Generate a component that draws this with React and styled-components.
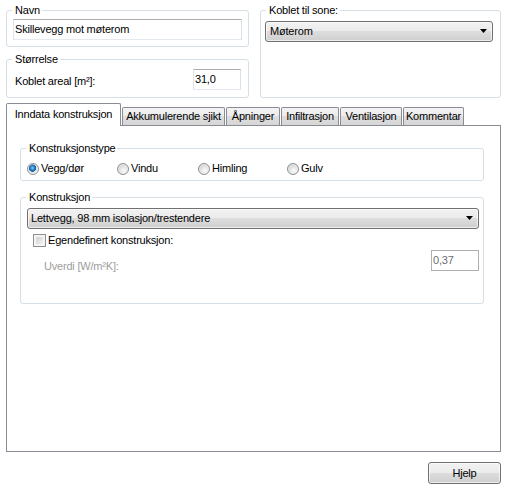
import React from 'react';
import styled, { createGlobalStyle } from 'styled-components';

const GlobalStyle = createGlobalStyle`
  html, body { margin: 0; padding: 0; background: #ffffff; }
  body {
    font-family: "Liberation Sans", Arial, sans-serif;
    font-size: 11px;
    line-height: 13px;
    letter-spacing: -0.2px;
    color: #000;
  }
  *, *::before, *::after { box-sizing: border-box; }
`;

const Window = styled.div`
  width: 507px;
  height: 492px;
  padding: 4px 6px 0 6px;
  display: flex;
  flex-direction: column;
`;

const TopArea = styled.div`
  display: grid;
  grid-template-columns: 243px 1fr;
  column-gap: 11px;
`;

const Column = styled.div`
  display: flex;
  flex-direction: column;
  gap: 6px;
`;

const Group = styled.fieldset`
  margin: ${(p) => p.$mt || 0}px 0 0 0;
  padding: 0;
  min-width: 0;
  border: 1px solid #d5dfe5;
  border-radius: 3px;
  flex: ${(p) => (p.$grow ? 1 : 'none')};
  height: ${(p) => (p.$h ? `${p.$h}px` : 'auto')};
`;

const Legend = styled.legend`
  margin-left: 5px;
  padding: 0 2px 0 3px;
  line-height: 13px;
  font-size: 11px;
`;

const GroupBody = styled.div`
  padding: ${(p) => p.$pad};
  display: flex;
  flex-direction: column;
`;

const TextBox = styled.input`
  display: block;
  height: 21px;
  width: ${(p) => (p.$w ? `${p.$w}px` : '100%')};
  margin: 0;
  padding: 0 1px 2px 1px;
  font-family: inherit;
  font-size: 11px;
  letter-spacing: -0.2px;
  color: ${(p) => (p.$disabled ? '#6d6d6d' : '#000')};
  background: #fff;
  border: 1px solid;
  border-color: ${(p) =>
    p.$disabled ? '#afafaf' : '#abadb3 #dbdfe6 #e3e9ef #e2e3ea'};
  border-radius: 0;
  outline: none;
`;

const Row = styled.div`
  display: flex;
  align-items: flex-start;
  justify-content: space-between;
  padding-left: ${(p) => p.$indent || 0}px;
  margin-top: ${(p) => p.$mt || 0}px;
`;

const FieldLabel = styled.span`
  padding-top: ${(p) => p.$offset || 0}px;
  color: ${(p) => (p.$disabled ? '#9d9d9d' : '#000')};
  white-space: nowrap;
`;

const Combo = styled.div`
  height: 21px;
  border: 1px solid #707070;
  border-radius: 3px;
  background: linear-gradient(#f2f2f2 0%, #ebebeb 50%, #dddddd 50%, #cfcfcf 100%);
  box-shadow: inset 0 0 0 1px rgba(255, 255, 255, 0.65);
  display: flex;
  align-items: center;
  justify-content: space-between;
  padding: 0 ${(p) => p.$arrowPad || 5}px 1px ${(p) => p.$textPad || 3}px;
  white-space: nowrap;
`;

const Arrow = () => (
  <svg width="7" height="4" viewBox="0 0 7 4">
    <polygon points="0,0 7,0 3.5,4" fill="#000" />
  </svg>
);

const TabStrip = styled.div`
  display: flex;
  align-items: flex-end;
  gap: 1px;
  height: 22px;
  margin-top: 5px;
`;

const Tab = styled.div`
  position: relative;
  z-index: ${(p) => (p.$active ? 1 : 0)};
  width: ${(p) => p.$w}px;
  height: ${(p) => (p.$active ? 23 : 18)}px;
  margin-bottom: ${(p) => (p.$active ? -1 : 0)}px;
  border: 1px solid #898c95;
  border-bottom: none;
  border-radius: 2px 2px 0 0;
  background: ${(p) =>
    p.$active
      ? '#ffffff'
      : 'linear-gradient(#f3f3f3 0%, #ebebeb 50%, #dedede 50%, #d6d6d6 100%)'};
  display: flex;
  align-items: center;
  justify-content: center;
  padding-bottom: ${(p) => (p.$active ? 1 : 0)}px;
  white-space: nowrap;
`;

const TabPanel = styled.div`
  height: 327px;
  border: 1px solid #898c95;
  padding: 16px 16px 0 13px;
  display: flex;
  flex-direction: column;
`;

const RadioRow = styled.div`
  display: flex;
  align-items: center;
  height: 13px;
  margin-top: 7px;
  padding-left: 6px;
`;

const RadioItem = styled.label`
  display: flex;
  align-items: center;
  gap: 2px;
  width: ${(p) => (p.$w ? `${p.$w}px` : 'auto')};
  white-space: nowrap;
`;

const RadioDot = styled.span`
  width: 12px;
  height: 12px;
  border-radius: 50%;
  border: 1px solid #8e8f8f;
  flex: none;
  background: ${(p) =>
    p.$checked
      ? 'radial-gradient(circle at 45% 40%, #8fd0f5 0px, #2a84cc 2px, #145b9c 3.5px, #dfe3e6 4px, #f4f4f4 100%)'
      : 'radial-gradient(circle at 60% 65%, #fbfbfb 0%, #e3e3e3 45%, #bdbdbd 100%)'};
  box-shadow: inset 0 0 0 1px rgba(255, 255, 255, 0.5);
`;

const CheckRow = styled.label`
  display: flex;
  align-items: center;
  gap: 2px;
  height: 13px;
  margin-top: 5px;
  padding-left: 6px;
  white-space: nowrap;
`;

const CheckBox = styled.span`
  width: 13px;
  height: 13px;
  flex: none;
  border: 1px solid #8f8f8f;
  background: linear-gradient(135deg, #c9c9c9 0%, #e6e6e6 60%, #f7f7f7 100%);
  box-shadow: inset 0 0 0 2px #f4f4f4;
`;

const Button = styled.button`
  align-self: flex-end;
  width: 73px;
  height: 22px;
  margin-top: 10px;
  border: 1px solid #707070;
  border-radius: 3px;
  background: linear-gradient(#f2f2f2 0%, #ebebeb 50%, #dddddd 50%, #cfcfcf 100%);
  box-shadow: inset 0 0 0 1px rgba(255, 255, 255, 0.65);
  font-family: inherit;
  font-size: 11px;
  letter-spacing: -0.2px;
  color: #000;
  padding: 0 0 1px 0;
`;

const tabs = [
  { label: 'Inndata konstruksjon', w: 115, active: true },
  { label: 'Akkumulerende sjikt', w: 103 },
  { label: 'Åpninger', w: 54 },
  { label: 'Infiltrasjon', w: 58 },
  { label: 'Ventilasjon', w: 62 },
  { label: 'Kommentar', w: 61 },
];

const radios = [
  { label: 'Vegg/dør', w: 90, checked: true },
  { label: 'Vindu', w: 81 },
  { label: 'Himling', w: 89 },
  { label: 'Gulv' },
];

export default function App() {
  return (
    <>
      <GlobalStyle />
      <Window>
        <TopArea>
          <Column>
            <Group>
              <Legend>Navn</Legend>
              <GroupBody $pad="2px 6px 6px 6px">
                <TextBox readOnly value="Skillevegg mot møterom" />
              </GroupBody>
            </Group>
            <Group $grow>
              <Legend>Størrelse</Legend>
              <GroupBody $pad="3px 7px 7px 8px">
                <Row>
                  <FieldLabel $offset={6}>Koblet areal [m²]:</FieldLabel>
                  <TextBox readOnly value="31,0" $w={48} />
                </Row>
              </GroupBody>
            </Group>
          </Column>
          <Group>
            <Legend>Koblet til sone:</Legend>
            <GroupBody $pad="4px 7px 0 4px">
              <Combo $textPad={4} $arrowPad={5}>
                <span>Møterom</span>
                <Arrow />
              </Combo>
            </GroupBody>
          </Group>
        </TopArea>

        <TabStrip>
          {tabs.map((t) => (
            <Tab key={t.label} $w={t.w} $active={t.active}>
              {t.label}
            </Tab>
          ))}
        </TabStrip>

        <TabPanel>
          <Group>
            <Legend>Konstruksjonstype</Legend>
            <GroupBody $pad="0 0 5px 0">
              <RadioRow>
                {radios.map((r) => (
                  <RadioItem key={r.label} $w={r.w}>
                    <RadioDot $checked={r.checked} />
                    {r.label}
                  </RadioItem>
                ))}
              </RadioRow>
            </GroupBody>
          </Group>

          <Group $mt={10} $h={113}>
            <Legend>Konstruksjon</Legend>
            <GroupBody $pad="4px 4px 0 6px">
              <Combo $textPad={3} $arrowPad={5}>
                <span>Lettvegg, 98 mm isolasjon/trestendere</span>
                <Arrow />
              </Combo>
              <CheckRow>
                <CheckBox />
                Egendefinert konstruksjon:
              </CheckRow>
              <Row $mt={3} $indent={17}>
                <FieldLabel $offset={10} $disabled>
                  Uverdi [W/m²K]:
                </FieldLabel>
                <TextBox readOnly value="0,37" $w={48} $disabled />
              </Row>
            </GroupBody>
          </Group>
        </TabPanel>

        <Button type="button">Hjelp</Button>
      </Window>
    </>
  );
}
